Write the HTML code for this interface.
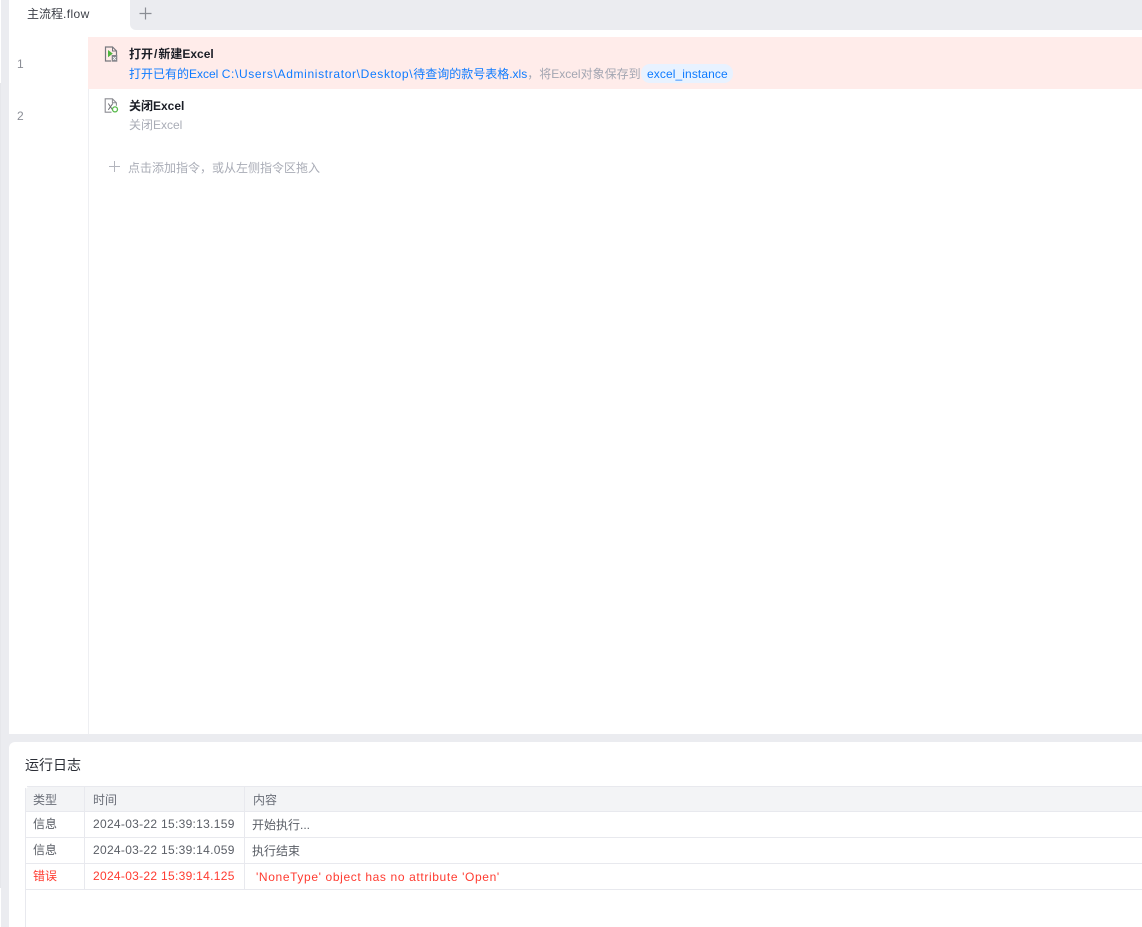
<!DOCTYPE html>
<html><head><meta charset="utf-8">
<style>
html,body{margin:0;padding:0;background:#fff}
body{width:1142px;height:927px;position:relative;overflow:hidden;font-family:"Liberation Sans","Noto Sans CJK SC",sans-serif;font-size:12px;color:#5a5e66}
.a{position:absolute;white-space:nowrap}
.t{position:absolute;white-space:nowrap;line-height:16px;height:16px}
.b{font-weight:700;color:#1b1e26;font-size:12px}
.h{background:#ebecf0;position:absolute}
.l{background:#e8e9ee;position:absolute}
.d{letter-spacing:.3px}
</style></head><body>
<div class="h" style="left:1px;top:0;width:8px;height:927px"></div>
<div class="a" style="left:0;top:83px;width:1px;height:805px;background:#e6e7eb"></div>
<div class="h" style="left:130px;top:0;width:1012px;height:30px;border-bottom-left-radius:6px"></div>
<div class="a" style="left:9px;top:0;width:121px;height:30px;background:#fff;border-top-left-radius:6px"></div>
<div class="t" style="left:27px;top:6px;font-size:12px;color:#3c3f47">主流程<span style="letter-spacing:.4px">.flow</span></div>
<svg class="a" style="left:138px;top:6px" width="15" height="15" viewBox="0 0 15 15"><path d="M7.5 1.5v12M1.5 7.5h12" stroke="#8a8d94" stroke-width="1.2" fill="none"/></svg>

<div class="a" style="left:88px;top:37px;width:1054px;height:52px;background:#ffecea"></div>
<div class="a" style="left:88px;top:89px;width:1px;height:645px;background:#eeeff2"></div>
<div class="t" style="left:17px;top:56px;color:#8b8e96">1</div>
<div class="t" style="left:17px;top:108px;color:#8b8e96">2</div>

<svg class="a" style="left:104px;top:46px" width="16" height="16" viewBox="0 0 16 16">
<path d="M7 15H1.5V1h7l4 4v4" fill="none" stroke="#77787e" stroke-width="1.2"/>
<path d="M8.5 1v4h4" fill="none" stroke="#77787e" stroke-width="1"/>
<path d="M4 4l4.8 3.6L4 11.2z" fill="#4fb53f"/>
<rect x="7.7" y="9" width="5.6" height="6.7" fill="#85868c"/>
<path d="M9.2 11l2.6 3M11.8 11l-2.6 3" stroke="#fff" stroke-width=".9"/>
</svg>
<svg class="a" style="left:104px;top:98px" width="16" height="16" viewBox="0 0 16 16">
<path d="M7.5 14.2H1.2V.8h7.2l4 4v3" fill="none" stroke="#8b8c92" stroke-width="1.1"/>
<path d="M8.4 .8v4h4" fill="none" stroke="#8b8c92" stroke-width="1"/>
<path d="M4.3 5.5l4.2 6.3M8.8 5.5l-4.5 6.3" stroke="#6d6e74" stroke-width="1" fill="none"/>
<circle cx="11" cy="11.4" r="2.5" fill="#fff" stroke="#55b948" stroke-width="1.3"/>
</svg>

<div class="t b" style="left:129px;top:46px">打开<span style="margin:0 1px">/</span>新建Excel</div>
<div class="t" style="left:129px;top:66px;color:#0f7bff">打开已有的Excel <span style="letter-spacing:.65px">C:\Users\Administrator\Desktop\</span>待查询的款号表格.xls<span style="color:#a3a6b2">，将Excel对象保存到</span></div>
<div class="a" style="left:641px;top:64px;width:92px;height:19px;background:#e8f2ff;border-radius:9px"></div>
<div class="t" style="left:647px;top:66px;color:#0f7bff;letter-spacing:.1px">excel_instance</div>
<div class="t b" style="left:129px;top:98px">关闭Excel</div>
<div class="t" style="left:129px;top:117px;color:#a9acb6">关闭Excel</div>

<svg class="a" style="left:108px;top:160px" width="13" height="13" viewBox="0 0 13 13"><path d="M6.5 1v11M1 6.5h11" stroke="#b3b5bd" stroke-width="1" fill="none"/></svg>
<div class="t" style="left:128px;top:160px;color:#a9acb6">点击添加指令，或从左侧指令区拖入</div>

<div class="h" style="left:9px;top:734px;width:1133px;height:8px"></div>
<div class="a" style="left:9px;top:742px;width:6px;height:6px;background:#ebecf0"></div>
<div class="a" style="left:9px;top:742px;width:12px;height:12px;background:#fff;border-top-left-radius:6px"></div>
<div class="t" style="left:25px;top:757px;font-size:14px;color:#2b2e36">运行日志</div>

<div class="a" style="left:26px;top:787px;width:1116px;height:24px;background:#f3f4f6;border-top-left-radius:3px"></div>
<div class="l" style="left:27px;top:786px;width:1115px;height:1px"></div>
<div class="l" style="left:25px;top:788px;width:1px;height:139px"></div>
<div class="l" style="left:26px;top:811px;width:1116px;height:1px"></div>
<div class="l" style="left:26px;top:837px;width:1116px;height:1px"></div>
<div class="l" style="left:26px;top:863px;width:1116px;height:1px"></div>
<div class="l" style="left:26px;top:889px;width:1116px;height:1px"></div>
<div class="l" style="left:84px;top:787px;width:1px;height:102px"></div>
<div class="l" style="left:244px;top:787px;width:1px;height:102px"></div>

<div class="t" style="left:33px;top:792px;color:#6a6e78">类型</div>
<div class="t" style="left:93px;top:792px;color:#6a6e78">时间</div>
<div class="t" style="left:253px;top:792px;color:#6a6e78">内容</div>

<div class="t" style="left:33px;top:816px">信息</div>
<div class="t d" style="left:93px;top:816px">2024-03-22 15:39:13.159</div>
<div class="t" style="left:252px;top:817px">开始执行...</div>
<div class="t" style="left:33px;top:842px">信息</div>
<div class="t d" style="left:93px;top:842px">2024-03-22 15:39:14.059</div>
<div class="t" style="left:252px;top:843px">执行结束</div>
<div class="t" style="left:33px;top:868px;color:#ff3b30">错误</div>
<div class="t d" style="left:93px;top:868px;color:#ff3b30">2024-03-22 15:39:14.125</div>
<div class="t" style="left:256px;top:869px;color:#ff3b30;letter-spacing:.63px">'NoneType' object has no attribute 'Open'</div>
</body></html>
